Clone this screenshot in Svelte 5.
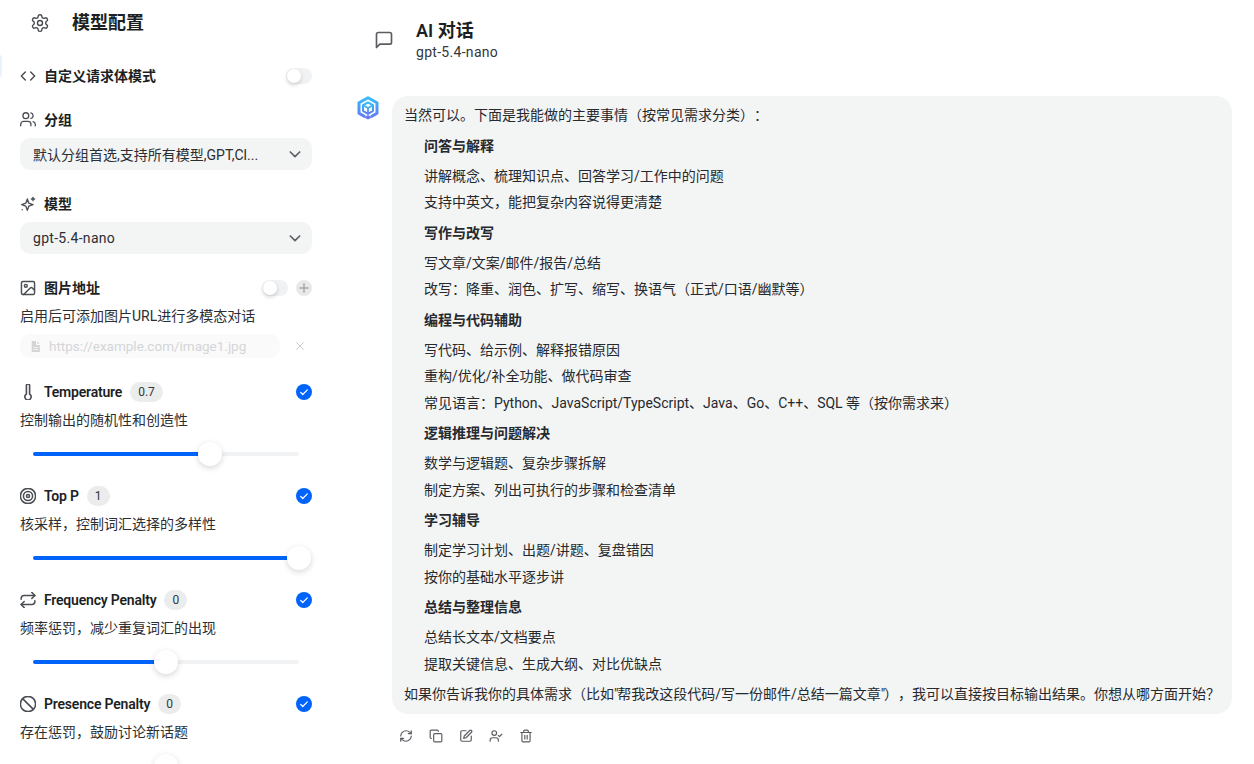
<script lang="ts">
	const params = [
		{ name: 'Temperature', value: '0.7', desc: '控制输出的随机性和创造性', pct: 66.5, icon: 'temp' },
		{ name: 'Top P', value: '1', desc: '核采样，控制词汇选择的多样性', pct: 100, icon: 'target' },
		{ name: 'Frequency Penalty', value: '0', desc: '频率惩罚，减少重复词汇的出现', pct: 50, icon: 'repeat' },
		{ name: 'Presence Penalty', value: '0', desc: '存在惩罚，鼓励讨论新话题', pct: 50, icon: 'ban' }
	];

	const sections = [
		{ title: '问答与解释', items: ['讲解概念、梳理知识点、回答学习/工作中的问题', '支持中英文，能把复杂内容说得更清楚'] },
		{ title: '写作与改写', items: ['写文章/文案/邮件/报告/总结', '改写：降重、润色、扩写、缩写、换语气（正式/口语/幽默等）'] },
		{
			title: '编程与代码辅助',
			items: ['写代码、给示例、解释报错原因', '重构/优化/补全功能、做代码审查', '常见语言：Python、JavaScript/TypeScript、Java、Go、C++、SQL 等（按你需求来）']
		},
		{ title: '逻辑推理与问题解决', items: ['数学与逻辑题、复杂步骤拆解', '制定方案、列出可执行的步骤和检查清单'] },
		{ title: '学习辅导', items: ['制定学习计划、出题/讲题、复盘错因', '按你的基础水平逐步讲'] },
		{ title: '总结与整理信息', items: ['总结长文本/文档要点', '提取关键信息、生成大纲、对比优缺点'] }
	];
</script>

<div class="page">
	<span class="edge-tab"></span>
	<aside class="sidebar">
		<header class="side-head">
			<svg class="gear" viewBox="0 0 24 24" width="20" height="20" fill="none" stroke="currentColor" stroke-width="1.7" stroke-linecap="round" stroke-linejoin="round">
				<path d="M12.22 2h-.44a2 2 0 0 0-2 2v.18a2 2 0 0 1-1 1.73l-.43.25a2 2 0 0 1-2 0l-.15-.08a2 2 0 0 0-2.73.73l-.22.38a2 2 0 0 0 .73 2.73l.15.1a2 2 0 0 1 1 1.72v.51a2 2 0 0 1-1 1.74l-.15.09a2 2 0 0 0-.73 2.73l.22.38a2 2 0 0 0 2.73.73l.15-.08a2 2 0 0 1 2 0l.43.25a2 2 0 0 1 1 1.73V20a2 2 0 0 0 2 2h.44a2 2 0 0 0 2-2v-.18a2 2 0 0 1 1-1.73l.43-.25a2 2 0 0 1 2 0l.15.08a2 2 0 0 0 2.73-.73l.22-.39a2 2 0 0 0-.73-2.73l-.15-.08a2 2 0 0 1-1-1.74v-.5a2 2 0 0 1 1-1.74l.15-.09a2 2 0 0 0 .73-2.73l-.22-.38a2 2 0 0 0-2.73-.73l-.15.08a2 2 0 0 1-2 0l-.43-.25a2 2 0 0 1-1-1.73V4a2 2 0 0 0-2-2z"/>
				<circle cx="12" cy="12" r="3"/>
			</svg>
			<h2>模型配置</h2>
		</header>

		<div class="row custom">
			<svg class="ico" viewBox="0 0 24 24" fill="none" stroke="currentColor" stroke-width="2.2" stroke-linecap="round" stroke-linejoin="round"><path d="m16 18 6-6-6-6"/><path d="m8 6-6 6 6 6"/></svg>
			<span class="label">自定义请求体模式</span>
			<span class="toggle"><i></i></span>
		</div>

		<div class="row group-label">
			<svg class="ico" viewBox="1 2 22 22" fill="none" stroke="currentColor" stroke-width="1.8" stroke-linecap="round" stroke-linejoin="round"><path d="M16 21v-2a4 4 0 0 0-4-4H6a4 4 0 0 0-4 4v2"/><circle cx="9" cy="7" r="4"/><path d="M22 21v-2a4 4 0 0 0-3-3.87"/><path d="M16 3.13a4 4 0 0 1 0 7.75"/></svg>
			<span class="label">分组</span>
		</div>
		<div class="select">
			<span>默认分组首选,支持所有模型,GPT,Cl...</span>
			<svg viewBox="0 0 24 24" width="16" height="16" fill="none" stroke="currentColor" stroke-width="2.6" stroke-linecap="round" stroke-linejoin="round"><path d="m5 9 7 7 7-7"/></svg>
		</div>

		<div class="row model-label">
			<svg class="ico" viewBox="0 0 24 24" fill="none" stroke="currentColor" stroke-width="2" stroke-linecap="round" stroke-linejoin="round"><path d="M11 4.500 13.200 10.800 19.500 13 13.200 15.200 11 21.500 8.800 15.200 2.500 13 8.800 10.800z"/><path d="M19.500 2v5"/><path d="M17 4.500h5"/><path d="M3.500 20.500h.01"/></svg>
			<span class="label">模型</span>
		</div>
		<div class="select">
			<span class="model-name">gpt-5.4-nano</span>
			<svg viewBox="0 0 24 24" width="16" height="16" fill="none" stroke="currentColor" stroke-width="2.6" stroke-linecap="round" stroke-linejoin="round"><path d="m5 9 7 7 7-7"/></svg>
		</div>

		<div class="row image-label">
			<svg class="ico" viewBox="1 1 22 22" fill="none" stroke="currentColor" stroke-width="2" stroke-linecap="round" stroke-linejoin="round"><rect x="3" y="3" width="18" height="18" rx="2"/><circle cx="9" cy="9" r="2"/><path d="m21 15-3.100-3.100a2 2 0 0 0-2.800 0L6 21"/></svg>
			<span class="label">图片地址</span>
			<span class="toggle"><i></i></span>
			<span class="plus">
				<svg viewBox="0 0 24 24" width="12" height="12" fill="none" stroke="currentColor" stroke-width="3" stroke-linecap="round"><path d="M12 4v16M4 12h16"/></svg>
			</span>
		</div>
		<p class="desc">启用后可添加图片URL进行多模态对话</p>
		<div class="url-row">
			<div class="url-input">
				<svg viewBox="0 0 24 24" width="13" height="13" fill="currentColor"><path d="M5 2h8v7h7v13H5zM15 2.500 19.500 7H15z"/><path d="M8 13h9v1.500H8zM8 17h9v1.500H8z" fill="#fafafa"/></svg>
				<span>https://example.com/image1.jpg</span>
			</div>
			<svg class="url-x" viewBox="0 0 24 24" width="10" height="10" fill="none" stroke="currentColor" stroke-width="2.400" stroke-linecap="round"><path d="M4 4l16 16M20 4 4 20"/></svg>
		</div>

		{#each params as p}
			<section class="param">
				<div class="row">
					{#if p.icon === 'temp'}
						<svg class="ico" viewBox="2 2 20 20" fill="none" stroke="currentColor" stroke-width="2" stroke-linecap="round" stroke-linejoin="round"><path d="M14 4v10.540a4 4 0 1 1-4 0V4a2 2 0 0 1 4 0Z"/></svg>
					{:else if p.icon === 'target'}
						<svg class="ico" viewBox="1.500 1.500 21 21" fill="none" stroke="currentColor" stroke-width="2" stroke-linecap="round" stroke-linejoin="round"><circle cx="12" cy="12" r="10"/><circle cx="12" cy="12" r="6"/><circle cx="12" cy="12" r="2"/></svg>
					{:else if p.icon === 'repeat'}
						<svg class="ico" viewBox="1.500 1.500 21 21" fill="none" stroke="currentColor" stroke-width="2" stroke-linecap="round" stroke-linejoin="round"><path d="m17 2 4 4-4 4"/><path d="M3 11v-1a4 4 0 0 1 4-4h14"/><path d="m7 22-4-4 4-4"/><path d="M21 13v1a4 4 0 0 1-4 4H3"/></svg>
					{:else}
						<svg class="ico" viewBox="1.500 1.500 21 21" fill="none" stroke="currentColor" stroke-width="2" stroke-linecap="round" stroke-linejoin="round"><circle cx="12" cy="12" r="10"/><path d="m4.900 4.900 14.200 14.200"/></svg>
					{/if}
					<span class="label latin">{p.name}</span>
					<span class="tag">{p.value}</span>
					<span class="check">
						<svg viewBox="0 0 24 24" width="10" height="10" fill="none" stroke="#fff" stroke-width="3" stroke-linecap="round" stroke-linejoin="round"><path d="m4 13 5 5L20 7"/></svg>
					</span>
				</div>
				<p class="desc">{p.desc}</p>
				<div class="slider">
					<div class="track">
						<div class="fill" style="width: {p.pct}%"></div>
						<span class="thumb" style="left: {p.pct}%"></span>
					</div>
				</div>
			</section>
		{/each}
	</aside>

	<main class="chat">
		<header class="chat-head">
			<svg class="chat-ico" viewBox="0 0 24 24" width="20" height="20" fill="none" stroke="currentColor" stroke-width="2" stroke-linejoin="round"><path d="M21 15a2 2 0 0 1-2 2H7l-4 4V5a2 2 0 0 1 2-2h14a2 2 0 0 1 2 2z"/></svg>
			<div>
				<h1>AI 对话</h1>
				<div class="sub model-name">gpt-5.4-nano</div>
			</div>
		</header>

		<div class="message">
			<svg class="avatar" viewBox="0 0 24 24" width="24" height="24">
				<defs>
					<linearGradient id="lg" x1="0" y1="0" x2="0" y2="1">
						<stop offset="0" stop-color="#35bdf6"/>
						<stop offset="1" stop-color="#5f7cf8"/>
					</linearGradient>
				</defs>
				<g fill="none" stroke="url(#lg)" stroke-linejoin="round">
					<path d="M9 20.800 3 17.300V6.800L12 1.700l9 5.100v10.500l-6 3.500" stroke-width="3"/>
					<path d="M12 6.500 17 9.200v5.600l-5 3-5-3V9.200z" stroke-width="2"/>
					<path d="M7 9.200l5 2.800 5-2.800M12 12v6" stroke-width="1.800"/>
				</g>
				<path d="M12 23.500 8 21.200l4-2.300 4 2.300z" fill="#6478f8"/>
			</svg>
			<div class="bubble">
				<p>当然可以。下面是我能做的主要事情（按常见需求分类）：</p>
				{#each sections as s}
					<div class="block">
						<h4>{s.title}</h4>
						{#each s.items as item}
							<p>{item}</p>
						{/each}
					</div>
				{/each}
				<p>如果你告诉我你的具体需求（比如<span class="q">"</span>帮我改这段代码/写一份邮件/总结一篇文章<span class="q">"</span>），我可以直接按目标输出结果。你想从哪方面开始？</p>
			</div>
		</div>

		<div class="actions">
			<svg viewBox="0 0 24 24" fill="none" stroke="currentColor" stroke-width="2" stroke-linecap="round" stroke-linejoin="round"><path d="M3 12a9 9 0 0 1 9-9 9.750 9.750 0 0 1 6.740 2.740L21 8"/><path d="M21 3v5h-5"/><path d="M21 12a9 9 0 0 1-9 9 9.750 9.750 0 0 1-6.740-2.740L3 16"/><path d="M8 16H3v5"/></svg>
			<svg viewBox="0 0 24 24" fill="none" stroke="currentColor" stroke-width="2" stroke-linecap="round" stroke-linejoin="round"><rect x="8" y="8" width="14" height="14" rx="2"/><path d="M4 16c-1.100 0-2-.9-2-2V4c0-1.100.9-2 2-2h10c1.100 0 2 .9 2 2"/></svg>
			<svg viewBox="0 0 24 24" fill="none" stroke="currentColor" stroke-width="2" stroke-linecap="round" stroke-linejoin="round"><path d="M12 3H5a2 2 0 0 0-2 2v14a2 2 0 0 0 2 2h14a2 2 0 0 0 2-2v-7"/><path d="M18.400 2.600a2.100 2.100 0 1 1 3 3L12 15l-4 1 1-4Z"/></svg>
			<svg viewBox="0 0 24 24" fill="none" stroke="currentColor" stroke-width="2" stroke-linecap="round" stroke-linejoin="round"><path d="M16 21v-2a4 4 0 0 0-4-4H6a4 4 0 0 0-4 4v2"/><circle cx="9" cy="7" r="4"/><path d="m16 11 2 2 4-4"/></svg>
			<svg viewBox="0 0 24 24" fill="none" stroke="currentColor" stroke-width="2" stroke-linecap="round" stroke-linejoin="round"><path d="M3 6h18"/><path d="M19 6v14a2 2 0 0 1-2 2H7a2 2 0 0 1-2-2V6"/><path d="M8 6V4a2 2 0 0 1 2-2h4a2 2 0 0 1 2 2v2"/><path d="M10 11v6"/><path d="M14 11v6"/></svg>
		</div>
	</main>
</div>

<style>
	:global(body) {
		margin: 0;
		background: #fff;
		font-family: Roboto, 'Noto Sans CJK SC', sans-serif;
		text-spacing-trim: space-all;
		color: #1c1f23;
	}

	.page {
		display: flex;
		height: 764px;
		overflow: hidden;
		position: relative;
	}

	.edge-tab {
		position: absolute;
		left: 0;
		top: 55px;
		width: 2px;
		height: 22px;
		background: #eaf3fe;
		border-radius: 0 4px 4px 0;
	}

	.sidebar {
		width: 292px;
		padding: 0 20px;
		flex-shrink: 0;
	}

	.side-head {
		display: flex;
		align-items: center;
		height: 46px;
		margin-left: 10px;
	}

	.gear {
		color: #4a4d52;
	}

	.side-head h2 {
		margin: 0 0 0 22px;
		font-size: 18px;
		font-weight: 700;
		line-height: 24px;
	}

	.row {
		display: flex;
		align-items: center;
		height: 20px;
	}

	.custom {
		margin-top: 20px;
	}

	.group-label {
		margin-top: 24px;
	}

	.model-label {
		margin-top: 24px;
	}

	.image-label {
		margin-top: 24px;
	}

	.ico {
		width: 16px;
		height: 16px;
		color: #4a4d52;
		margin-right: 8px;
		flex-shrink: 0;
	}

	.label {
		font-size: 14px;
		font-weight: 600;
		line-height: 20px;
	}

	.label.latin {
		letter-spacing: -0.2px;
	}

	.toggle {
		margin-left: auto;
		width: 26px;
		height: 16px;
		border-radius: 8px;
		background: #f1f2f3;
		position: relative;
	}

	.toggle i {
		position: absolute;
		left: 1px;
		top: 1px;
		width: 14px;
		height: 14px;
		border-radius: 50%;
		background: #fff;
		box-shadow: 0 2px 4px rgba(0, 0, 0, 0.18);
	}

	.select {
		display: flex;
		align-items: center;
		justify-content: space-between;
		height: 32px;
		margin-top: 8px;
		padding: 0 9px 0 13px;
		border-radius: 10px;
		background: #f3f4f4;
		font-size: 14px;
		color: #2b2e33;
	}

	.select svg {
		color: #5f6268;
	}

	.model-name {
		letter-spacing: 0.3px;
	}

	.plus {
		display: flex;
		align-items: center;
		justify-content: center;
		width: 16px;
		height: 16px;
		border-radius: 50%;
		background: #e8e9ea;
		color: #a6a8ab;
		margin-left: 8px;
	}

	.desc {
		margin: 8px 0 0;
		font-size: 14px;
		line-height: 20px;
		color: #2b2e33;
	}

	.url-row {
		display: flex;
		align-items: center;
		justify-content: space-between;
		margin-top: 8px;
		padding-right: 7px;
	}

	.url-input {
		display: flex;
		align-items: center;
		gap: 7px;
		width: 260px;
		height: 24px;
		box-sizing: border-box;
		padding: 0 9px;
		border-radius: 10px;
		background: #fafafa;
		font-size: 13.5px;
		color: #d4d5d7;
	}

	.url-x {
		color: #c9cacc;
	}

	.param {
		height: 104px;
	}

	.url-row + .param {
		margin-top: 24px;
	}

	.param .label + .tag {
		margin-left: 8px;
	}

	.tag {
		display: inline-block;
		min-width: 22px;
		box-sizing: border-box;
		padding: 0 8px;
		height: 20px;
		line-height: 20px;
		border-radius: 10px;
		background: #ebecec;
		font-size: 12px;
		text-align: center;
		color: #33363b;
	}

	.check {
		display: flex;
		align-items: center;
		justify-content: center;
		margin-left: auto;
		width: 16px;
		height: 16px;
		border-radius: 50%;
		background: #0064fa;
	}

	.slider {
		margin: 22px 13px 0;
	}

	.track {
		position: relative;
		height: 4px;
		border-radius: 2px;
		background: #f1f2f3;
	}

	.fill {
		height: 100%;
		border-radius: 2px;
		background: #0064fa;
	}

	.thumb {
		position: absolute;
		top: 50%;
		width: 24px;
		height: 24px;
		margin: -12px 0 0 -12px;
		border-radius: 50%;
		background: #fff;
		box-shadow: 0 2px 6px rgba(0, 0, 0, 0.16);
	}

	.chat {
		flex: 1;
		min-width: 0;
		padding: 0 22px 0 24px;
	}

	.chat-head {
		display: flex;
		align-items: center;
		height: 80px;
		padding-left: 18px;
		margin-bottom: 16px;
	}

	.chat-ico {
		color: #5a5d62;
		margin-right: 22px;
	}

	.chat-head h1 {
		margin: 0;
		font-size: 18px;
		font-weight: 600;
		line-height: 24px;
	}

	.sub {
		font-size: 14px;
		line-height: 18px;
		color: #33363b;
	}

	.message {
		display: flex;
		gap: 12px;
	}

	.avatar {
		flex-shrink: 0;
	}

	.bubble {
		flex: 1;
		min-width: 0;
		padding: 6.4px 12px 7px;
		border-radius: 16px;
		background: #f3f5f5;
		font-size: 14px;
		line-height: 26.25px;
		color: #26292d;
	}

	.bubble p {
		margin: 0;
		white-space: nowrap;
	}

	.q {
		letter-spacing: -1.3px;
	}

	.block {
		padding-left: 20px;
		margin: 4px 0;
	}

	.block h4 {
		margin: 0 0 4.25px;
		font-size: 14px;
		font-weight: 600;
		line-height: 26.25px;
	}

	.actions {
		display: flex;
		gap: 16px;
		margin: 15px 0 0 43px;
		color: #595c61;
	}

	.actions svg {
		width: 14px;
		height: 14px;
	}
</style>
